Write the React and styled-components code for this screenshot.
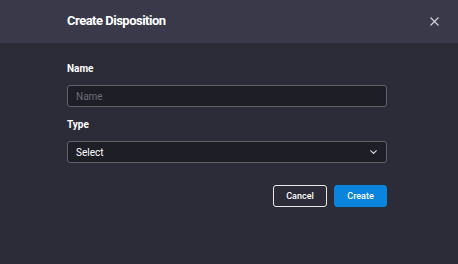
import React from "react";
import styled, { createGlobalStyle } from "styled-components";

const Global = createGlobalStyle`
  html, body { margin: 0; padding: 0; background: #2c2c38; }
  body { font-family: Roboto, "Liberation Sans", sans-serif; }
  * { box-sizing: border-box; }
`;

const Modal = styled.div`
  width: 458px;
  height: 264px;
  background: #2c2c38;
  display: flex;
  flex-direction: column;
`;

const Header = styled.div`
  height: 43px;
  background: #393949;
  display: flex;
  align-items: center;
  justify-content: space-between;
  padding: 0 18px 0 67px;
`;

const Title = styled.h2`
  margin: 0;
  font-size: 13px;
  font-weight: 700;
  color: #ffffff;
  letter-spacing: -0.5px;
  line-height: 16px;
  padding-bottom: 1px;
`;

const CloseButton = styled.button`
  background: none;
  border: none;
  padding: 0;
  width: 11px;
  height: 11px;
  display: flex;
  align-items: center;
  justify-content: center;
  cursor: pointer;
`;

const Body = styled.div`
  padding: 19px 71px 0 67px;
  display: flex;
  flex-direction: column;
`;

const Field = styled.div`
  display: flex;
  flex-direction: column;
  margin-bottom: ${(p) => p.$mb || 0}px;
`;

const Label = styled.label`
  font-size: 10px;
  font-weight: 700;
  color: #ffffff;
  line-height: 14px;
  margin-bottom: 9px;
`;

const Input = styled.input`
  height: 22px;
  width: 100%;
  background: #1e1e26;
  border: 1px solid #62626c;
  border-radius: 3px;
  padding: 0 8px;
  font-family: inherit;
  font-size: 10px;
  color: #ffffff;
  outline: none;
  &::placeholder { color: #6c6c76; }
`;

const SelectBox = styled.div`
  height: 22px;
  background: #1e1e26;
  border: 1px solid #62626c;
  border-radius: 3px;
  padding: 0 9px 0 8px;
  display: flex;
  align-items: center;
  justify-content: space-between;
  font-size: 10px;
  color: #ffffff;
`;

const Actions = styled.div`
  display: flex;
  justify-content: flex-end;
  gap: 7px;
  margin-top: 22px;
`;

const Button = styled.button`
  height: 22px;
  width: ${(p) => p.$w}px;
  border-radius: 3px;
  font-family: inherit;
  font-size: 9px;
  font-weight: 500;
  color: #ffffff;
  cursor: pointer;
  padding: 0;
  background: ${(p) => (p.$primary ? "#0a84dc" : "transparent")};
  border: 1px solid ${(p) => (p.$primary ? "#0a84dc" : "#e8e8ec")};
`;

export default function App() {
  return (
    <>
      <Global />
      <Modal>
        <Header>
          <Title>Create Disposition</Title>
          <CloseButton aria-label="Close">
            <svg width="9" height="9" viewBox="0 0 9 9">
              <path d="M0.5 0.5 L8.5 8.5 M8.5 0.5 L0.5 8.5" stroke="#d6d6de" strokeWidth="1.1" fill="none" />
            </svg>
          </CloseButton>
        </Header>
        <Body>
          <Field $mb={11}>
            <Label>Name</Label>
            <Input placeholder="Name" />
          </Field>
          <Field>
            <Label>Type</Label>
            <SelectBox>
              <span>Select</span>
              <svg width="7" height="4" viewBox="0 0 7 4">
                <path d="M0.4 0.4 L3.5 3.5 L6.6 0.4" stroke="#d6d6de" strokeWidth="1.1" fill="none" />
              </svg>
            </SelectBox>
          </Field>
          <Actions>
            <Button $w={54}>Cancel</Button>
            <Button $w={53} $primary>Create</Button>
          </Actions>
        </Body>
      </Modal>
    </>
  );
}
